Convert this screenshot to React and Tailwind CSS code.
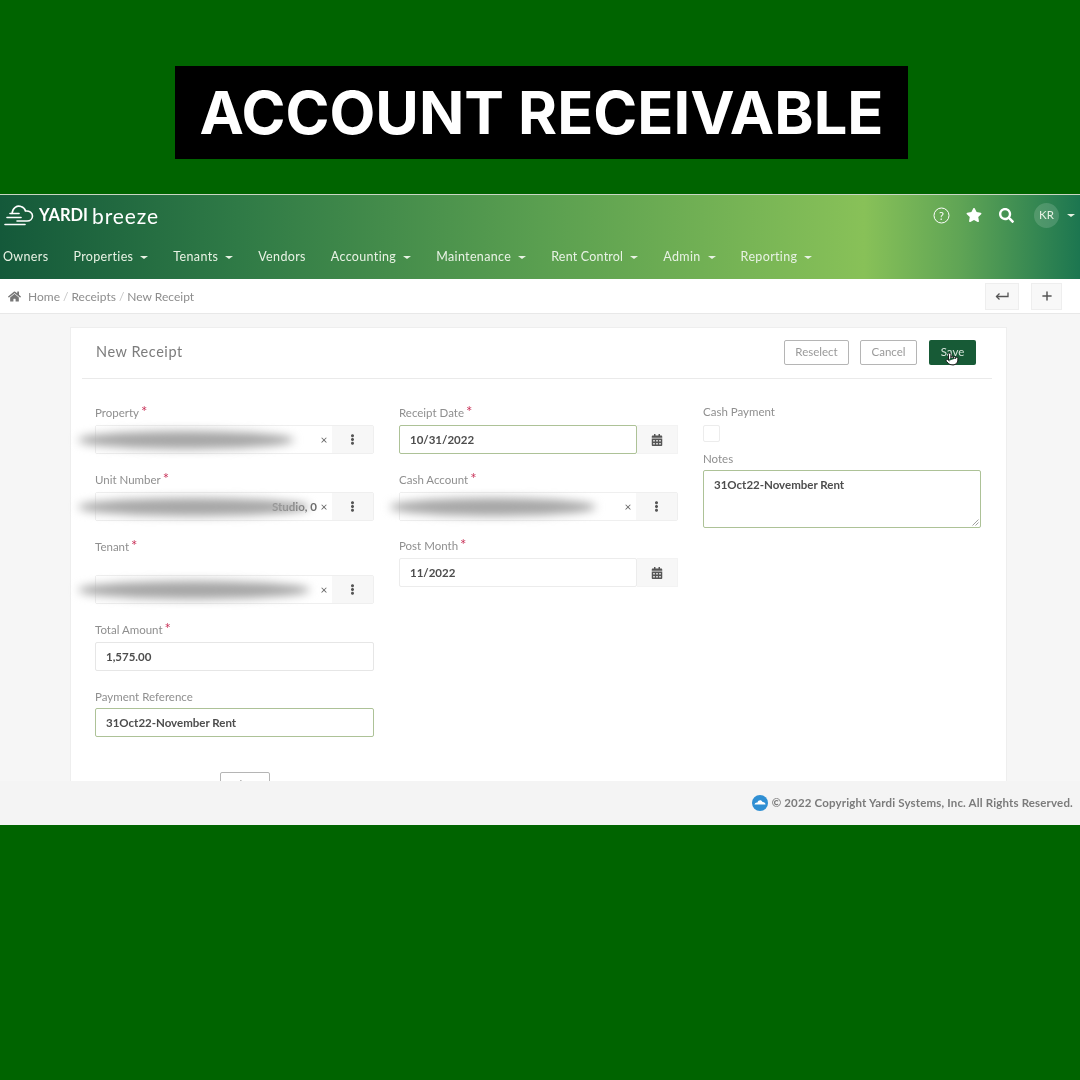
import React from 'react';
import { FaHome, FaStar, FaSearch, FaCalendarAlt, FaEllipsisV } from 'react-icons/fa';
import { Plus, Pointer } from 'lucide-react';

const navItems = [
  { name: 'Owners' },
  { name: 'Properties', caret: true },
  { name: 'Tenants', caret: true },
  { name: 'Vendors' },
  { name: 'Accounting', caret: true },
  { name: 'Maintenance', caret: true },
  { name: 'Rent Control', caret: true, tight: true },
  { name: 'Admin', caret: true },
  { name: 'Reporting', caret: true },
];

const Caret = ({ className }) => (
  <span className={`inline-block w-0 h-0 border-x-[4px] border-x-transparent border-t-[3px] border-t-[#e8f2e4] ${className}`} />
);

const Label = ({ text, required, className = 'mb-[5px]' }) => (
  <div className={`h-4 leading-4 text-[11.5px] text-[#8f8f8f] ${className}`}>
    {text}
    {required && <span className="text-[#c9345a] ml-[2px] text-[15px] leading-none">*</span>}
  </div>
);

const Lookup = ({ smear, extra }) => (
  <div className="relative flex h-[29px] border border-[#efefef] rounded-[2px]">
    <div className="flex-1 flex items-center justify-end pr-[2px] bg-white">
      {extra && <span className="text-[11.5px] font-bold text-[#6a6a6a] mr-[1px]">{extra}</span>}
      <span className="text-[12px] text-[#666] w-[12px] text-center">×</span>
    </div>
    <div className="w-[41px] flex items-center justify-center bg-[#f7f7f7] text-[#555]">
      <FaEllipsisV size={11} />
    </div>
    <div className={`absolute top-[5px] h-[18px] rounded-[50%] bg-[#a6a6a6] blur-[5px] ${smear}`} />
  </div>
);

const DateInput = ({ value, focused }) => (
  <div className="flex h-[29px]">
    <div className={`flex-1 flex items-center pl-[10px] text-[11.5px] font-bold text-[#4d4d4d] bg-white rounded-[2px] border ${focused ? 'border-[#adc297]' : 'border-[#ececec]'}`}>
      {value}
    </div>
    <div className="w-[41px] flex items-center justify-center bg-[#f7f7f7] border-y border-r border-[#f3f3f3] text-[#555]">
      <FaCalendarAlt size={12} />
    </div>
  </div>
);

const TextInput = ({ value, focused }) => (
  <div className={`h-[29px] flex items-center pl-[10px] text-[11.5px] font-bold text-[#4d4d4d] bg-white rounded-[2px] border ${focused ? 'border-[#adc297]' : 'border-[#e6e6e6]'}`}>
    {value}
  </div>
);

const OutlineButton = ({ text, className }) => (
  <button className={`h-[25px] rounded-[2px] border border-[#b5b5b5] bg-white text-[11.5px] text-[#9a9a9a] ${className}`}>
    {text}
  </button>
);

const App = () => {
  return (
    <div className="w-[1080px] h-[1080px] bg-[#006400] pt-[66px] overflow-hidden font-['Lato','Noto_Sans',sans-serif]">
      <div className="ml-[175px] w-[733px] h-[93px] bg-black flex items-center justify-center">
        <h1 className="font-['Inter',sans-serif] text-[59.5px] font-bold text-white leading-none">ACCOUNT RECEIVABLE</h1>
      </div>

      <div className="mt-[35px] h-[631px] flex flex-col bg-[#f6f6f6] blur-[0.5px]">
        {/* top bar */}
        <div className="h-[85px] border-t border-[#c9d6c4] bg-[linear-gradient(90deg,#14593a_0%,#2f7a46_22%,#5a9f50_50%,#88c158_80%,#5fa455_89%,#1c7650_100%)] text-[#e8f2e4]">
          <div className="h-[42px] pb-[2px] flex items-center pl-[4px]">
            <svg width="30" height="23" viewBox="0 0 30 23" fill="none" stroke="white" strokeWidth="1.6" strokeLinecap="round">
              <path d="M8 9.5 C8.5 4 13 1 17 2.5 C19.5 3.3 21 5 21.5 7 C25.5 6.5 28.5 9 28.5 12 C28.5 15 26 17 23 17 L13 17" />
              <path d="M6 9.5 L15 9.5" />
              <path d="M3 13.5 L17 13.5" />
              <path d="M1 20.5 L21 20.5" />
            </svg>
            <span className="ml-[5px] text-[16.5px] font-bold text-white">YARDI</span>
            <span className="ml-[4px] text-[21px] leading-none text-white tracking-[0.9px]">breeze</span>
            <div className="ml-auto flex items-center text-white">
              <svg width="17" height="17" viewBox="0 0 17 17" fill="none" stroke="white" strokeWidth="1">
                <circle cx="8.5" cy="8.5" r="7.5" />
                <text x="8.5" y="12.5" textAnchor="middle" fontSize="11" fill="white" stroke="none">?</text>
              </svg>
              <FaStar size={16} className="ml-[16px]" />
              <FaSearch size={15} className="ml-[17px]" />
              <div className="ml-[20px] w-[25px] h-[25px] rounded-full bg-white/15 flex items-center justify-center text-[11.5px] text-[#e8f2e4]">KR</div>
              <Caret className="ml-[8px] mr-[5px]" />
            </div>
          </div>
          <nav className="h-[42px] pb-[2px] flex items-center pl-[3px] gap-[25px] text-[12.5px] tracking-[0.35px]">
            {navItems.map((item) => (
              <div key={item.name} className={`flex items-center ${item.tight ? 'tracking-[0.2px]' : ''}`}>
                {item.name}
                {item.caret && <Caret className="ml-[7px]" />}
              </div>
            ))}
          </nav>
        </div>

        {/* breadcrumb */}
        <div className="h-[35px] bg-white border-b border-[#e8e8e8] flex items-center pl-[8px] text-[12px] text-[#8d8d8d]">
          <FaHome size={13} className="text-[#777]" />
          <span className="ml-[7px] pt-px">Home</span>
          <span className="mx-[3px] pt-px text-[#c5c5c5]">/</span>
          <span className="pt-px">Receipts</span>
          <span className="mx-[3px] pt-px text-[#c5c5c5]">/</span>
          <span className="pt-px">New Receipt</span>
          <div className="ml-auto flex items-center gap-[12px] mr-[18px]">
            <div className="w-[34px] h-[27px] bg-[#f8f8f8] border border-[#eeeeee] flex items-center justify-center">
              <svg width="14" height="10" viewBox="0 0 14 10" fill="none" stroke="#555" strokeWidth="1.3">
                <path d="M13 1.5 V5.5 H1.5" />
                <path d="M4.5 2.5 L1.5 5.5 L4.5 8.5" />
              </svg>
            </div>
            <div className="w-[31px] h-[27px] bg-[#f8f8f8] border border-[#eeeeee] flex items-center justify-center text-[#555]">
              <Plus size={14} strokeWidth={2.5} />
            </div>
          </div>
        </div>

        {/* page body */}
        <div className="flex-1 overflow-hidden pt-[13px] pl-[70px]">
          <div className="w-[937px] h-[600px] bg-white border border-[#eeeeee] pt-[12px]">
            <div className="relative ml-[11px] mr-[14px] h-[39px] pb-[14px] border-b border-[#eaeaea] flex items-center">
              <span className="ml-[14px] text-[14.5px] text-[#7c7c7c] tracking-[0.55px]">New Receipt</span>
              <div className="ml-auto mr-[16px] flex items-center">
                <OutlineButton text="Reselect" className="w-[65px]" />
                <OutlineButton text="Cancel" className="w-[57px] ml-[11px]" />
                <button className="w-[47px] h-[25px] ml-[12px] rounded-[2px] bg-[#175a36] text-[11.5px] text-[#d9e6dc]">Save</button>
              </div>
              <Pointer size={14} fill="white" stroke="#111" strokeWidth={1.6} className="absolute left-[863px] top-[12px]" />
            </div>

            <div className="grid grid-cols-[279px_279px_279px] gap-x-[25px] pl-[24px] pt-[25px]">
              <div>
                <Label text="Property" required />
                <Lookup smear="-left-[18px] w-[216px]" />
                <Label text="Unit Number" required className="mt-[17px] mb-[5px]" />
                <Lookup smear="-left-[18px] w-[232px]" extra="Studio, 0" />
                <Label text="Tenant" required className="mt-[17px] mb-[21px]" />
                <Lookup smear="-left-[18px] w-[232px]" />
                <Label text="Total Amount" required className="mt-[17px] mb-[5px]" />
                <TextInput value="1,575.00" />
                <Label text="Payment Reference" className="mt-[18px] mb-[3px]" />
                <TextInput value="31Oct22-November Rent" focused />
                <button className="block mt-[35px] ml-[125px] w-[50px] h-[25px] rounded-[2px] border border-[#b5b5b5] bg-white text-[11.5px] text-[#9a9a9a]">Clear</button>
              </div>

              <div>
                <Label text="Receipt Date" required />
                <DateInput value="10/31/2022" focused />
                <Label text="Cash Account" required className="mt-[17px] mb-[5px]" />
                <Lookup smear="-left-[10px] w-[206px]" />
                <Label text="Post Month" required className="mt-[16px] mb-[5px]" />
                <DateInput value="11/2022" />
              </div>

              <div>
                <Label text="Cash Payment" />
                <div className="w-[17px] h-[17px] border border-[#ececec] rounded-[2px] bg-white" />
                <Label text="Notes" className="mt-[9px] mb-[3px]" />
                <div className="relative w-[278px] h-[58px] border border-[#adc297] rounded-[2px] bg-white pl-[10px] pt-[5px] text-[11.5px] font-bold text-[#4d4d4d]">
                  31Oct22-November Rent
                  <svg width="7" height="7" viewBox="0 0 7 7" stroke="#888" strokeWidth="0.8" className="absolute right-[1px] bottom-[1px]">
                    <path d="M0.5 6.5 L6.5 0.5 M3.5 6.5 L6.5 3.5" />
                  </svg>
                </div>
              </div>
            </div>
          </div>
        </div>

        {/* footer */}
        <div className="h-[44px] bg-[#f4f4f4] flex items-center justify-end pr-[7px] text-[11.5px] font-bold text-[#7b7b7b] tracking-[0.16px]">
          <svg width="16" height="16" viewBox="0 0 16 16" className="mr-[4px]">
            <circle cx="8" cy="8" r="8" fill="#2f8fd3" />
            <path d="M2.5 9.5 C3 7.5 5 7.5 5.5 7.5 C6 5 9.5 4.5 10.5 7 C12 6.8 13.5 8 13.5 9.5 Z" fill="white" />
          </svg>
          © 2022 Copyright Yardi Systems, Inc. All Rights Reserved.
        </div>
      </div>
    </div>
  );
};

export default App;
